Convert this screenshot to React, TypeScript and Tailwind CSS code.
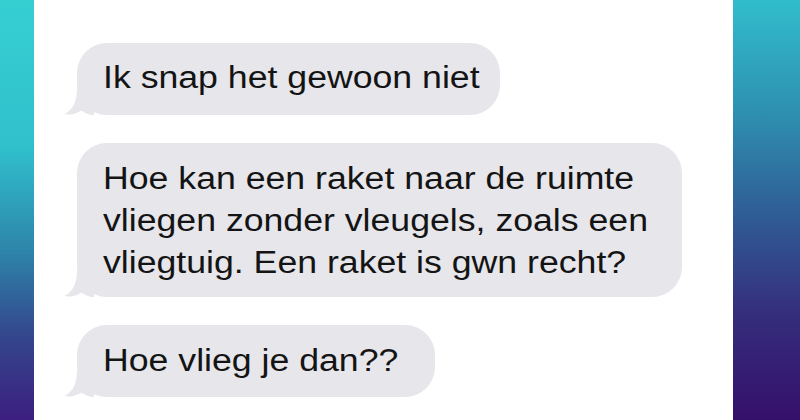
const font = { fontFamily: '"Liberation Sans", Arial, sans-serif' };

function Tail() {
  return (
    <svg
      className="absolute bottom-0 left-[-13px] h-[26px] w-[30px]"
      viewBox="0 0 30 26"
      aria-hidden
    >
      <path d="M13 0 C13 12 9 21 0.5 25 C7 26.4 13 24.5 17.5 21.5 C21 24 25 26 30 26 L30 0 Z" fill="#e6e6eb" />
    </svg>
  );
}

function Bubble({ lines, width, pad }: { lines: string[]; width: string; pad: string }) {
  return (
    <div className={`relative ml-[43px] rounded-[30px] bg-[#e6e6eb] pl-[26px] ${width} ${pad}`}>
      <Tail />
      <p className="relative text-[31px] leading-[42px] text-[#141414] whitespace-nowrap" style={font}>
        {lines.map((l) => (
          <span key={l} className="block origin-left scale-x-[1.15]">
            {l}
          </span>
        ))}
      </p>
    </div>
  );
}

export default function App() {
  return (
    <div className="flex h-[420px] w-[800px] overflow-hidden bg-white">
      <div className="w-[34px] shrink-0 bg-[linear-gradient(180deg,#35cfd2_0%,#30c0cc_35%,#2d84aa_60%,#34468c_80%,#3c1f80_100%)]" />
      <div className="flex flex-1 flex-col gap-[28px] pt-[43px]">
        <Bubble lines={["Ik snap het gewoon niet"]} width="w-[423px]" pad="pt-[14px] pb-[16px]" />
        <Bubble
          lines={[
            "Hoe kan een raket naar de ruimte",
            "vliegen zonder vleugels, zoals een",
            "vliegtuig. Een raket is gwn recht?",
          ]}
          width="w-[605px]"
          pad="pt-[15px] pb-[13px]"
        />
        <Bubble lines={["Hoe vlieg je dan??"]} width="w-[358px]" pad="pt-[15px] pb-[15px]" />
      </div>
      <div className="w-[67px] shrink-0 bg-[linear-gradient(180deg,#31bdcb_0%,#2e93b3_25%,#2f5f96_50%,#352d7c_75%,#35106a_100%)]" />
    </div>
  );
}
